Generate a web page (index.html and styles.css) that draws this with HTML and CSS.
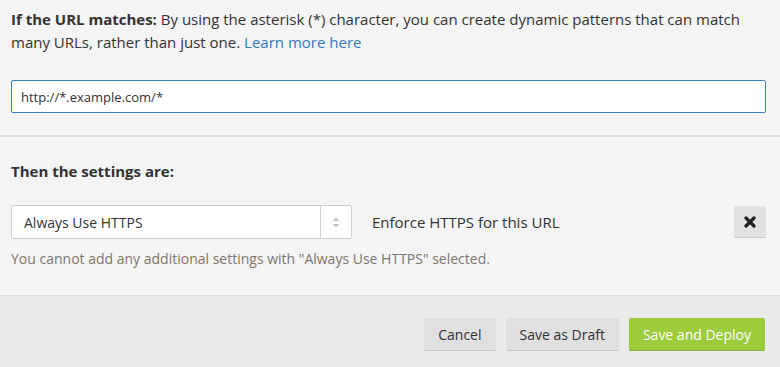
FILE: index.html
```html
<!DOCTYPE html>
<html lang="en">
  <head>
    <meta charset="UTF-8" />
    <meta name="viewport" content="width=device-width, initial-scale=1.0" />
    <title>Page Rule</title>
    <link rel="stylesheet" href="styles.css">
  </head>
  <body>
    <div class="section section-match">
      <p class="intro">
        <strong>If the URL matches:</strong> By using the asterisk (*) character, you can create dynamic patterns that can match
        many URLs, rather than just one. <a href="#">Learn more here</a>
      </p>
      <input type="text" class="url-input" value="http://*.example.com/*" />
    </div>
    <div class="section section-settings">
      <h2>Then the settings are:</h2>
      <div class="setting-row">
        <div class="fake-select">
          <span class="fake-select-value">Always Use HTTPS</span>
          <span class="fake-select-arrows">
            <svg width="8" height="11" viewBox="0 0 8 11">
              <path d="M4 0.5 L7.5 4 L0.5 4 Z" fill="#c4c4c4" />
              <path d="M4 10.5 L7.5 7 L0.5 7 Z" fill="#c4c4c4" />
            </svg>
          </span>
        </div>
        <span class="setting-desc">Enforce HTTPS for this URL</span>
        <button class="remove-btn" title="Remove">
          <svg width="12" height="12" viewBox="0 0 12 12">
            <path d="M2 2 L10 10 M10 2 L2 10" stroke="#222" stroke-width="3.2" stroke-linecap="round" />
          </svg>
        </button>
      </div>
      <p class="hint">You cannot add any additional settings with "Always Use HTTPS" selected.</p>
    </div>
    <div class="footer">
      <button class="button">Cancel</button>
      <button class="button">Save as Draft</button>
      <button class="button button-primary">Save and Deploy</button>
    </div>
  </body>
</html>
```

FILE: styles.css
```css
body {
  font-family: "Open Sans", Arial, sans-serif;
  font-size: 15px;
  color: #333;
  background-color: #f4f4f4;
  margin: 0;
}
.section {
  padding: 0 14px 0 11px;
}
.section-match {
  padding-top: 8px;
  padding-bottom: 22px;
  border-bottom: 2px solid #dedede;
}
.intro {
  margin: 0 0 26px;
  line-height: 23px;
}
.intro strong {
  font-weight: 700;
}
.intro a {
  color: #2f7bbf;
  text-decoration: none;
}
.url-input {
  display: block;
  box-sizing: border-box;
  width: 100%;
  height: 33px;
  padding: 0 9px;
  font-family: inherit;
  font-size: 13px;
  color: #333;
  background-color: #fff;
  border: 1px solid #3b7bc6;
  border-radius: 2px;
  outline: none;
}
.section-settings {
  padding-top: 23px;
  padding-bottom: 26px;
  border-bottom: 1px solid #dedede;
}
.section-settings h2 {
  margin: 0 0 22px;
  font-size: 15px;
  font-weight: 700;
  line-height: 23px;
}
.setting-row {
  display: flex;
  align-items: center;
}
.fake-select {
  display: flex;
  box-sizing: border-box;
  width: 341px;
  height: 34px;
  background-color: #fff;
  border: 1px solid #cfcfcf;
  border-radius: 2px;
}
.fake-select-value {
  flex: 1;
  display: flex;
  align-items: center;
  padding-left: 12px;
  font-size: 14px;
}
.fake-select-arrows {
  display: flex;
  align-items: center;
  justify-content: center;
  width: 30px;
  border-left: 1px solid #cfcfcf;
}
.setting-desc {
  margin-left: 20px;
  font-size: 15px;
}
.remove-btn {
  display: flex;
  align-items: center;
  justify-content: center;
  margin-left: auto;
  width: 32px;
  height: 32px;
  padding: 0;
  border: none;
  border-bottom: 1px solid #c9c9c9;
  border-radius: 2px;
  background-color: #e2e2e2;
  cursor: pointer;
}
.hint {
  margin: 10px 0 0;
  font-size: 14px;
  line-height: 20px;
  color: #7f766e;
}
.footer {
  display: flex;
  justify-content: flex-end;
  gap: 10px;
  padding: 22px 15px 16px 11px;
  background-color: #ebebeb;
  min-height: 71px;
  box-sizing: border-box;
}
.button {
  height: 33px;
  padding: 0 14px;
  font-family: inherit;
  font-size: 14px;
  color: #333;
  background-color: #e0e0e0;
  border: none;
  border-bottom: 1px solid #c6c6c6;
  border-radius: 2px;
  cursor: pointer;
}
.button-primary {
  color: #fff;
  background-color: #9ccb3b;
  border-bottom-color: #86b02f;
}
```
